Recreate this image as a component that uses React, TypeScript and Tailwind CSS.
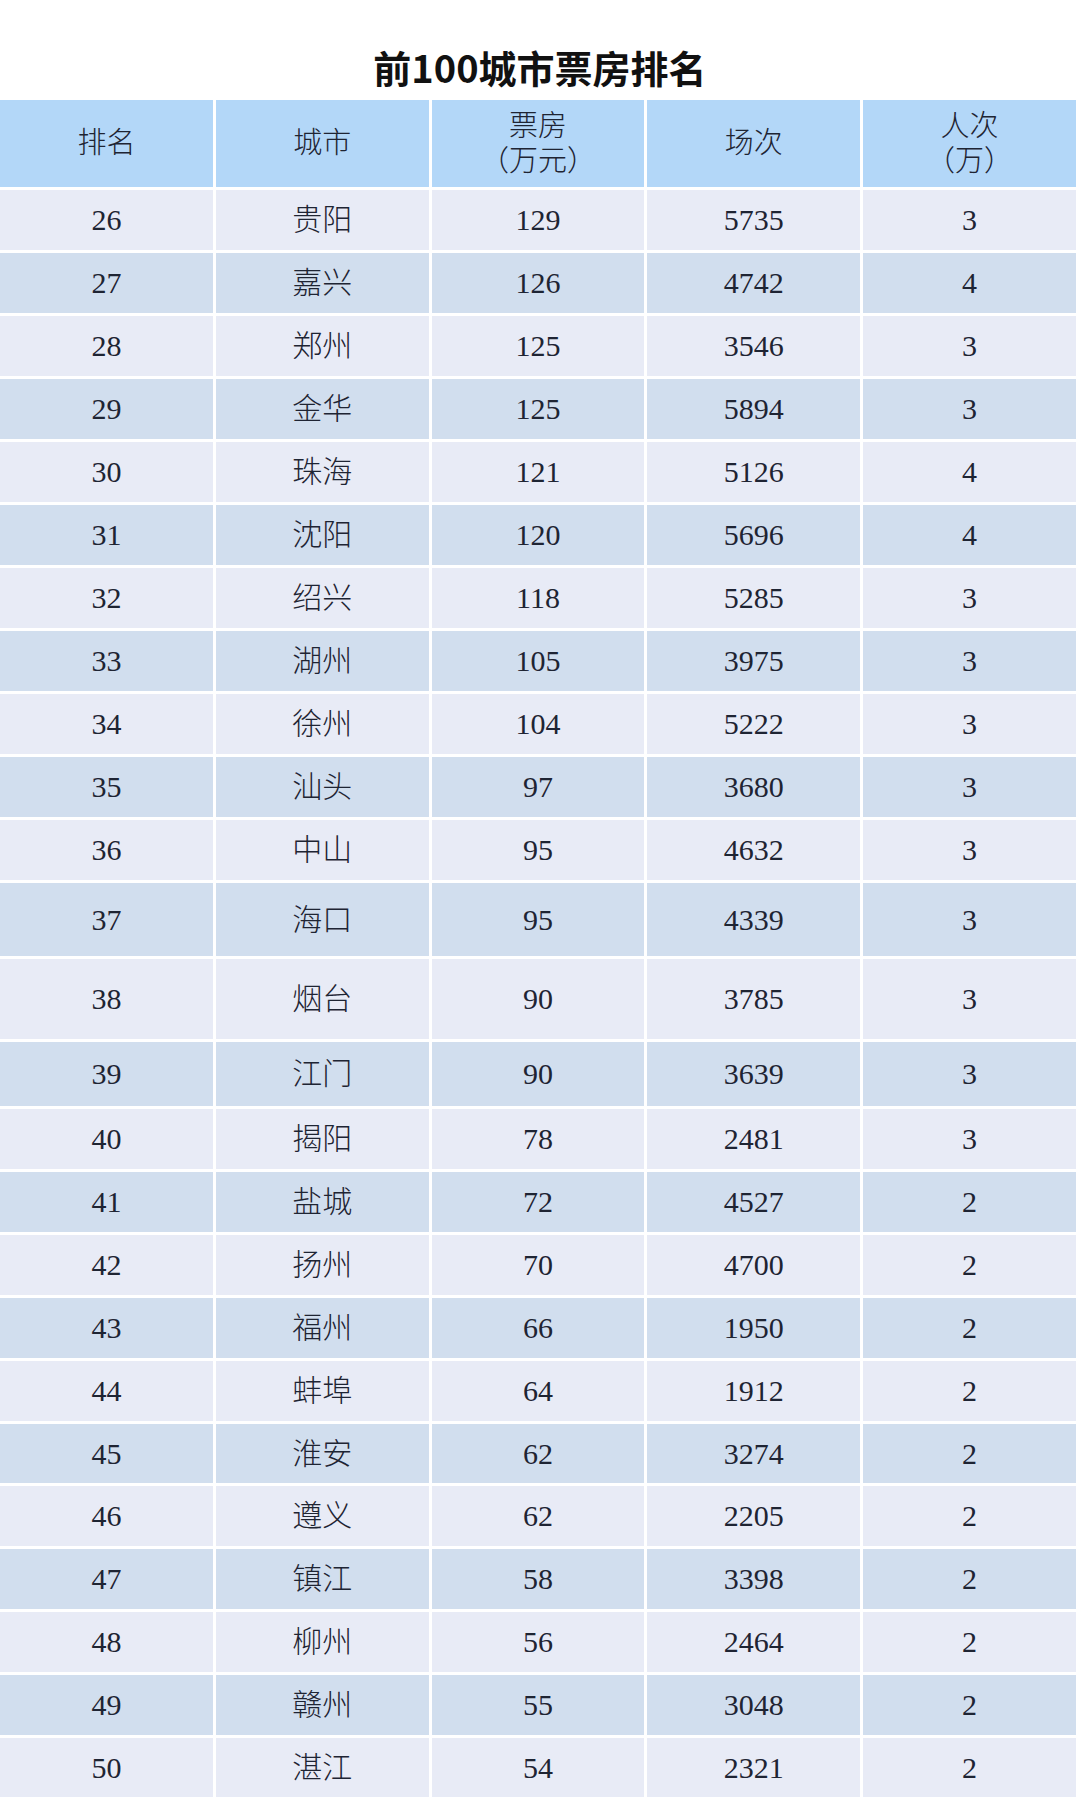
const rows: [number, string, number, number, number, number][] = [
  [26, "贵阳", 129, 5735, 3, 60],
  [27, "嘉兴", 126, 4742, 4, 60],
  [28, "郑州", 125, 3546, 3, 60],
  [29, "金华", 125, 5894, 3, 60],
  [30, "珠海", 121, 5126, 4, 60],
  [31, "沈阳", 120, 5696, 4, 60],
  [32, "绍兴", 118, 5285, 3, 60],
  [33, "湖州", 105, 3975, 3, 60],
  [34, "徐州", 104, 5222, 3, 60],
  [35, "汕头", 97, 3680, 3, 60],
  [36, "中山", 95, 4632, 3, 60],
  [37, "海口", 95, 4339, 3, 73],
  [38, "烟台", 90, 3785, 3, 80],
  [39, "江门", 90, 3639, 3, 64],
  [40, "揭阳", 78, 2481, 3, 60],
  [41, "盐城", 72, 4527, 2, 60],
  [42, "扬州", 70, 4700, 2, 60],
  [43, "福州", 66, 1950, 2, 60],
  [44, "蚌埠", 64, 1912, 2, 60],
  [45, "淮安", 62, 3274, 2, 59],
  [46, "遵义", 62, 2205, 2, 60],
  [47, "镇江", 58, 3398, 2, 60],
  [48, "柳州", 56, 2464, 2, 60],
  [49, "赣州", 55, 3048, 2, 60],
  [50, "湛江", 54, 2321, 2, 59],
]

const cellFont = { fontFamily: '"Liberation Serif", "Noto Sans CJK SC", serif' }

export default function App() {
  return (
    <div className="w-[1080px] h-[1800px] bg-white overflow-hidden">
      {/* Title */}
      <div className="h-[100px] flex items-end justify-center pb-[14px]">
        <h1
          className="text-[38px] font-bold text-[#111111] leading-none"
          style={{ fontFamily: '"Noto Sans CJK SC", sans-serif' }}
        >
          前100城市票房排名
        </h1>
      </div>

      {/* Table */}
      <div className="w-[1076px] flex flex-col gap-[3px] text-[#1e2433]" style={cellFont}>
        <div className="grid grid-cols-5 gap-x-[3px] h-[87px]">
          <HeadCell>排名</HeadCell>
          <HeadCell>城市</HeadCell>
          <HeadCell>
            票房
            <br />
            （万元）
          </HeadCell>
          <HeadCell>场次</HeadCell>
          <HeadCell>
            人次
            <br />
            （万）
          </HeadCell>
        </div>

        {rows.map(([rank, city, box, shows, people, h], i) => (
          <div
            key={rank}
            className="grid grid-cols-5 gap-x-[3px]"
            style={{ height: h }}
          >
            {[rank, city, box, shows, people].map((v, j) => (
              <div
                key={j}
                className={`${
                  i % 2 === 0 ? "bg-[#e8ebf6]" : "bg-[#d1deee]"
                } flex items-center justify-center text-[30px] font-light leading-none`}
              >
                {v}
              </div>
            ))}
          </div>
        ))}
      </div>
    </div>
  )
}

function HeadCell({ children }: { children: React.ReactNode }) {
  return (
    <div className="bg-[#b3d7f8] flex items-center justify-center text-center text-[29px] leading-[35px] font-light">
      <span>{children}</span>
    </div>
  )
}
